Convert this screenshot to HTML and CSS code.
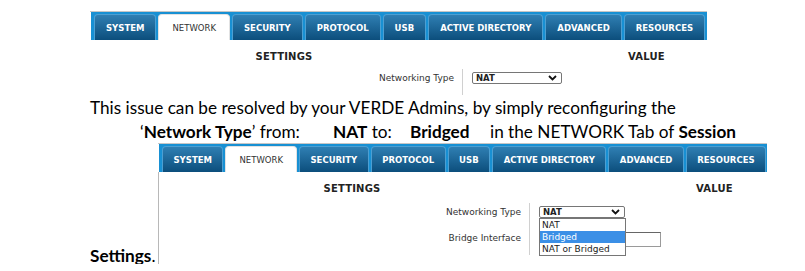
FILE: index.html
```html
<!DOCTYPE html>
<html lang="en">
<head>
  <meta charset="UTF-8" />
  <title>Network Type</title>
  <link rel="stylesheet" href="styles.css">
</head>
<body>

  <div class="page">

    <div class="shot shot-1">
      <div class="tabbar">
        <div class="tab">SYSTEM</div>
        <div class="tab active">NETWORK</div>
        <div class="tab">SECURITY</div>
        <div class="tab">PROTOCOL</div>
        <div class="tab">USB</div>
        <div class="tab">ACTIVE DIRECTORY</div>
        <div class="tab">ADVANCED</div>
        <div class="tab">RESOURCES</div>
      </div>
      <div class="content">
        <div class="heads">
          <span class="hd-settings">SETTINGS</span>
          <span class="hd-value">VALUE</span>
        </div>
        <div class="row">
          <div class="lbl">Networking Type</div>
          <div class="val">
            <div class="select">NAT
              <svg class="chev" width="9" height="6" viewBox="0 0 9 6"><polyline points="1,1 4.5,4.5 8,1" fill="none" stroke="#111" stroke-width="1.8"/></svg>
            </div>
          </div>
        </div>
      </div>
    </div>

    <p class="line">This issue can be resolved by your VERDE Admins, by simply reconfiguring the</p>
    <p class="line line-2">
      <span class="stop stop-1">‘<b>Network Type</b>’ from:</span><span class="stop stop-2"><b>NAT</b> to:</span><span class="stop stop-3"><b>Bridged</b></span><span>in the NETWORK Tab of <b>Session</b></span>
    </p>

    <div class="line-3">
      <span class="end-word"><b>Settings</b>.</span>

      <div class="shot shot-2">
        <div class="tabbar">
          <div class="tab">SYSTEM</div>
          <div class="tab active">NETWORK</div>
          <div class="tab">SECURITY</div>
          <div class="tab">PROTOCOL</div>
          <div class="tab">USB</div>
          <div class="tab">ACTIVE DIRECTORY</div>
          <div class="tab">ADVANCED</div>
          <div class="tab">RESOURCES</div>
        </div>
        <div class="content">
          <div class="heads">
            <span class="hd-settings">SETTINGS</span>
            <span class="hd-value">VALUE</span>
          </div>
          <div class="row">
            <div class="lbl">Networking Type</div>
            <div class="val">
              <div class="select">NAT
                <svg class="chev" width="9" height="6" viewBox="0 0 9 6"><polyline points="1,1 4.5,4.5 8,1" fill="none" stroke="#111" stroke-width="1.8"/></svg>
                <ul class="options">
                  <li>NAT</li>
                  <li class="picked">Bridged</li>
                  <li>NAT or Bridged</li>
                </ul>
              </div>
            </div>
          </div>
          <div class="row">
            <div class="lbl">Bridge Interface</div>
            <div class="val"><div class="input"></div></div>
          </div>
        </div>
      </div>
    </div>

  </div>

</body>
</html>
```

FILE: styles.css
```css
* {
  box-sizing: border-box;
  margin: 0;
  padding: 0;
}

body {
  font-family: 'Lato', 'Liberation Sans', sans-serif;
  background: #fff;
  color: #000;
}

.page {
  padding-left: 90px;
}

/* screenshots of the admin console */
.shot {
  border-top: 1px solid #c6c6c6;
  font-family: 'DejaVu Sans', sans-serif;
}

.shot-1 {
  margin-top: 11px;
  width: 617px;
  height: 85px;
  overflow: hidden;
  padding-left: 1px;
}

.tabbar {
  height: 28px;
  background: #1890d3;
  display: flex;
  align-items: flex-end;
  gap: 2px;
  padding: 0 3px;
  overflow: hidden;
}

.tab {
  flex-shrink: 0;
  height: 26px;
  padding: 0 11px;
  display: flex;
  align-items: center;
  white-space: nowrap;
  color: #fff;
  font-size: 8.5px;
  font-weight: bold;
  background: linear-gradient(#2f7fb3, #0c4e7c);
  border: 1px solid #4c9fd2;
  border-bottom: none;
  border-radius: 4px 4px 0 0;
}

.tab.active {
  background: #fff;
  color: #333;
  font-weight: normal;
  border-color: #e2e2e2;
  padding: 0 13px;
}

.heads {
  height: 29px;
  padding-top: 11px;
  display: flex;
  font-size: 10px;
  font-weight: bold;
  line-height: 12px;
  color: #222;
  letter-spacing: 0.2px;
}

.hd-settings {
  width: 386px;
  text-align: center;
}

.hd-value {
  margin-left: 151px;
}

.row {
  display: grid;
  grid-template-columns: 371px 1fr;
  height: 26px;
}

.lbl {
  text-align: right;
  padding: 4px 8px 0 0;
  font-size: 9px;
  line-height: 11px;
  color: #333;
}

.val {
  border-left: 1px solid #d0d0d0;
  padding: 3px 0 0 9px;
}

.select {
  position: relative;
  width: 90px;
  height: 12px;
  border: 1px solid #767676;
  border-radius: 2px;
  padding-left: 3px;
  font-size: 8.5px;
  font-weight: bold;
  line-height: 10px;
  color: #222;
}

.chev {
  position: absolute;
  right: 4px;
  top: 2px;
}

.options {
  position: absolute;
  top: 11px;
  left: -1px;
  width: 87px;
  list-style: none;
  background: #fff;
  border: 1px solid #767676;
  font-weight: normal;
  font-size: 9px;
  line-height: 12px;
  z-index: 2;
}

.options li {
  padding-left: 2px;
  height: 12px;
}

.options .picked {
  background: #3b8fe6;
  color: #fff;
}

.input {
  width: 122px;
  height: 15px;
  border: 1px solid #9a9a9a;
  border-top-color: #666;
  border-left-color: #666;
}

/* document text */
.line {
  font-size: 17.2px;
  line-height: 24px;
}

.line-2 {
  padding-left: 50px;
}

.stop {
  display: inline-block;
}

.stop-1 { width: 193px; }
.stop-2 { width: 77px; }
.stop-3 { width: 80px; }

.line-3 {
  display: flex;
  align-items: flex-end;
  margin-top: -1px;
}

.end-word {
  width: 68px;
  font-size: 17.2px;
  line-height: 24px;
  margin-bottom: -4px;
}

.shot-2 {
  width: 609px;
}

.shot-2 .tabbar {
  margin-left: 1px;
}

.shot-2 .tab {
  padding: 0 10.5px;
}

.shot-2 .tab.active {
  padding: 0 13px;
}

.shot-2 .content {
  border-left: 1px solid #b8b8b8;
  padding-bottom: 9px;
}

.shot-2 .heads {
  height: 31px;
}

.shot-2 .row {
  grid-template-columns: 370px 1fr;
}

.shot-2 .select {
  width: 86px;
}
```
